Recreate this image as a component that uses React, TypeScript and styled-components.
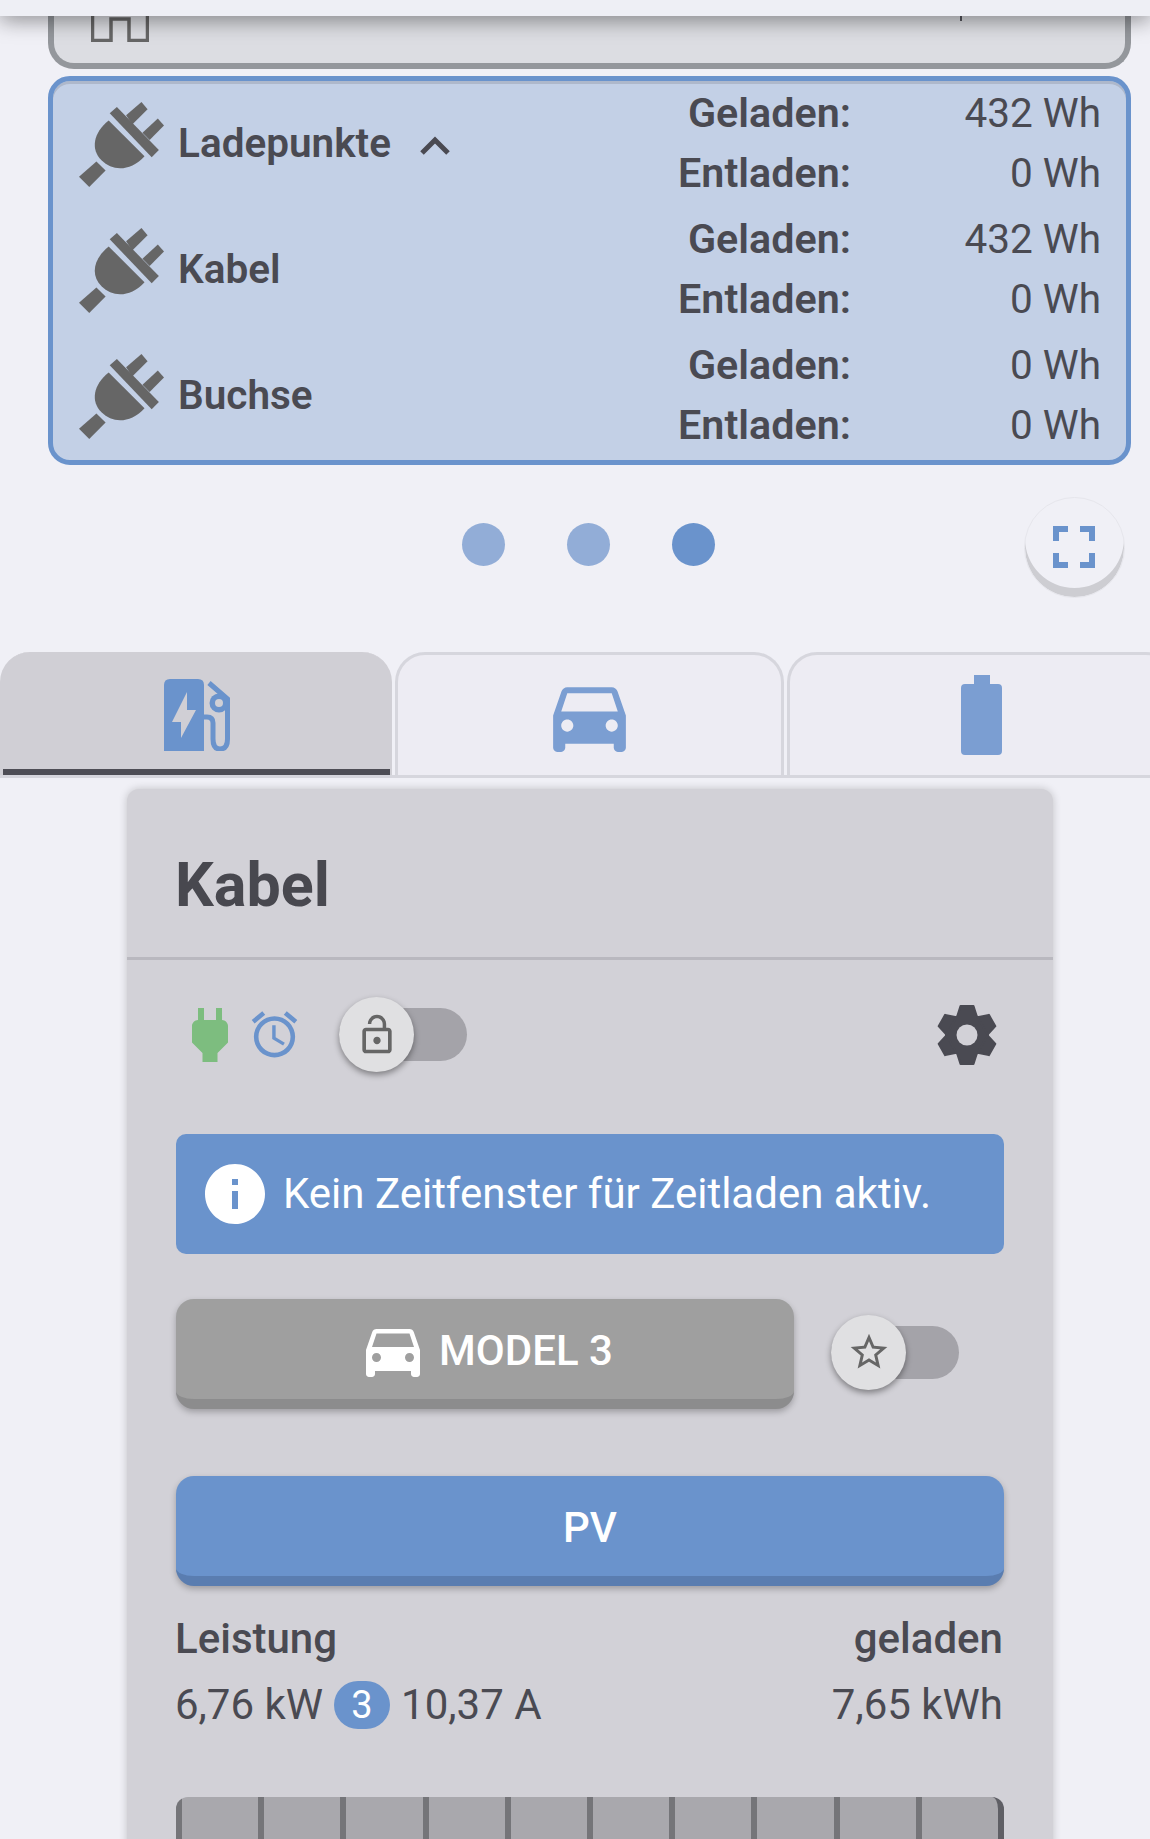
import React from 'react';
import styled, { createGlobalStyle } from 'styled-components';
import { MdDirectionsCar, MdInfo, MdLockOpen, MdOutlineAlarm, MdPower, MdStarBorder } from 'react-icons/md';

const GlobalStyle = createGlobalStyle`
  html, body {
    margin: 0;
    padding: 0;
    background: #f0f0f6;
    font-family: Roboto, "Liberation Sans", sans-serif;
    color: #4a4a52;
  }
`;

const Page = styled.div`
  width: 1150px;
  height: 1839px;
  overflow: hidden;
  background: #f0f0f6;
`;

const TopBar = styled.div`
  position: relative;
  z-index: 2;
  height: 16px;
  background: #eeeff5;
  box-shadow: 0 2px 22px rgba(0, 0, 0, 0.55);
`;

const ClippedCard = styled.div`
  box-sizing: border-box;
  display: flex;
  justify-content: space-between;
  height: 53px;
  margin: 0 19px 0 48px;
  padding-left: 37px;
  background: #dcdde2;
  border: 6px solid #94979c;
  border-top: 0;
  border-radius: 0 0 26px 26px;
`;

const Comma = styled.span`
  width: 2px;
  height: 5px;
  margin: 0 163px 0 0;
  background: #55555c;
`;

const SumCard = styled.section`
  box-sizing: border-box;
  height: 389px;
  margin: 7px 19px 0 48px;
  padding: 2px 25px 0 26px;
  background: #c3d0e6;
  border: 5px solid #6a93cc;
  border-radius: 22px;
  box-shadow: inset 0 3px 0 #aeb8cb;
`;

const SumRow = styled.div`
  display: grid;
  grid-template-columns: 86px 1fr 237px;
  column-gap: 13px;
  align-items: center;
  height: 120px;
  margin-bottom: 6px;
`;

const SumName = styled.div`
  display: flex;
  align-items: center;
  gap: 28px;
  font-size: 40.5px;
  font-weight: 600;
`;

const Chevron = styled.svg`
  width: 32px;
  height: 20px;
  margin-top: 4px;
`;

const PlugGlyphBox = styled.svg`
  margin-top: 3px;
`;

const FigureLabels = styled.div`
  display: flex;
  flex-direction: column;
  align-items: flex-end;
  font-size: 41.3px;
  font-weight: 600;
  line-height: 60px;
  justify-self: end;
  grid-column: 2;
  grid-row: 1;
`;

const FigureValues = styled.div`
  display: flex;
  flex-direction: column;
  align-items: flex-end;
  font-size: 40.5px;
  font-weight: 400;
  line-height: 60px;
  grid-column: 3;
  grid-row: 1;
`;

const NameCell = styled.div`
  grid-column: 2;
  grid-row: 1;
`;

const DotRow = styled.div`
  position: relative;
  display: flex;
  justify-content: center;
  gap: 62px;
  height: 187px;
  padding: 58px 0 0 27px;
  box-sizing: border-box;
`;

const Dot = styled.span<{ $active?: boolean }>`
  width: 43px;
  height: 43px;
  border-radius: 50%;
  background: ${(p) => (p.$active ? '#6a93cc' : '#92add7')};
`;

const FullscreenButton = styled.button`
  position: absolute;
  top: 32px;
  right: 25px;
  display: flex;
  align-items: center;
  justify-content: center;
  box-sizing: border-box;
  width: 101px;
  height: 101px;
  padding: 0 2px 2px 0;
  background: #f0f0f6;
  border: 1px solid #e6e6ec;
  border-radius: 50%;
  box-shadow: inset 0 -9px 0 #cdcdd2;
`;

const TabBar = styled.nav`
  display: flex;
  gap: 3px;
  height: 126px;
  box-sizing: border-box;
  border-bottom: 3px solid #d6d6dd;
`;

const Tab = styled.div<{ $active?: boolean }>`
  box-sizing: border-box;
  flex: 0 0 ${(p) => (p.$active ? '392px' : '389px')};
  display: flex;
  justify-content: center;
  height: 123px;
  border-radius: 30px 30px 0 0;
  background: ${(p) => (p.$active ? '#d0cfd5' : '#edecf3')};
  border: solid ${(p) => (p.$active ? '#d0cfd5' : '#d6d6dd')};
  border-width: ${(p) => (p.$active ? '0 2px 0 3px' : '3px 3px 0 3px')};
  color: #7b9ed2;
`;

const ActiveTabInner = styled.div`
  flex: 1;
  display: flex;
  justify-content: center;
  padding-top: 27px;
  height: 123px;
  box-sizing: border-box;
  border-bottom: 6px solid #4e4e56;
`;

const CarTabIcon = styled(MdDirectionsCar)`
  margin-top: 12px;
`;

const BatteryTabIcon = styled.svg`
  margin-top: 20px;
`;

const Card = styled.article`
  box-sizing: border-box;
  width: 926px;
  margin: 11px 0 0 127px;
  background: #d2d1d7;
  border-radius: 12px 12px 0 0;
  box-shadow: 0 0 8px rgba(0, 0, 0, 0.2);
  height: 1100px;
`;

const CardHeader = styled.header`
  box-sizing: border-box;
  height: 171px;
  padding: 61px 48px 0;
  border-bottom: 3px solid #b9b8bf;
`;

const CardTitle = styled.h1`
  margin: 0;
  font-size: 61px;
  font-weight: 700;
  line-height: 70px;
  color: #48484f;
`;

const CardBody = styled.div`
  padding: 37px 49px 0;
`;

const StatusRow = styled.div`
  display: flex;
  align-items: center;
  height: 75px;
`;

const PlugIcon = styled(MdPower)`
  margin-left: -2px;
  color: #7dbd7f;
`;

const AlarmIcon = styled(MdOutlineAlarm)`
  margin-left: 1px;
  color: #6a93cc;
`;

const Switch = styled.div<{ $offset?: number }>`
  display: flex;
  align-items: center;
  width: 128px;
  height: 53px;
  margin-left: ${(p) => p.$offset ?? 37}px;
  background: #a4a3a9;
  border-radius: 27px;
`;

const StarSwitch = styled(Switch)`
  margin-top: -4px;
`;

const SwitchThumb = styled.div`
  display: flex;
  flex: 0 0 75px;
  align-items: center;
  justify-content: center;
  height: 75px;
  color: #666;
  background: #e0e0e2;
  border-radius: 50%;
  box-shadow: 0 3px 6px rgba(0, 0, 0, 0.4);
`;

const GearIcon = styled.svg`
  margin-left: auto;
  margin-right: 7px;
`;

const Alert = styled.div`
  display: flex;
  align-items: center;
  gap: 12px;
  height: 120px;
  margin-top: 62px;
  padding-left: 23px;
  font-size: 42px;
  line-height: 116px;
  color: #fff;
  background: #6a93cc;
  border-radius: 10px;
`;

const VehicleRow = styled.div`
  display: flex;
  align-items: center;
  margin-top: 45px;
`;

const PushButton = styled.button<{ $tone: string; $edge: string; $wide?: boolean }>`
  box-sizing: border-box;
  display: flex;
  align-items: center;
  justify-content: center;
  gap: 10px;
  width: ${(p) => (p.$wide ? '828px' : '618px')};
  height: 110px;
  padding: 2px 0 0;
  font-family: inherit;
  font-size: 42px;
  font-weight: 500;
  color: #fff;
  background: ${(p) => p.$tone};
  border: 0;
  border-bottom: 10px solid ${(p) => p.$edge};
  border-radius: 18px;
  box-shadow: 0 3px 6px rgba(0, 0, 0, 0.25);
`;

const PvWrap = styled.div`
  margin-top: 67px;
`;

const Metrics = styled.div`
  display: grid;
  grid-template-columns: 1fr auto;
  row-gap: 17px;
  margin: 28px 1px 0 -1px;
  font-size: 42px;
  line-height: 49px;
`;

const MetricHead = styled.div<{ $right?: boolean }>`
  font-weight: 500;
  text-align: ${(p) => (p.$right ? 'right' : 'left')};
`;

const MetricValue = styled.div`
  display: flex;
  align-items: center;
  gap: 11px;
`;

const PhaseBadge = styled.span`
  display: inline-block;
  width: 56px;
  height: 48px;
  font-size: 38px;
  line-height: 48px;
  text-align: center;
  color: #fff;
  background: #6a93cc;
  border-radius: 24px;
`;

const EnergyBar = styled.div`
  display: grid;
  grid-template-columns: repeat(10, 1fr);
  height: 60px;
  margin-top: 68px;
  overflow: hidden;
  background: #a9a8ad;
  border-right: 6px solid #5f5f65;
  border-radius: 12px 12px 0 0;
`;

const BarSegment = styled.span`
  border-left: 6px solid #757579;
`;

const PlugGlyph = () => (
  <PlugGlyphBox width="86" height="86" viewBox="0 0 84 84" fill="#666">
    <polygon points="17,58 26,67 10,83 0,73" />
    <path d="M29 18 L64 53 C50 68 33 68 22 57 C11 46 14 30 29 18 Z" />
    <polygon points="30,11 37,5 78,47 71,54" />
    <polygon points="46,13 61,0 67,7 52,22" />
    <polygon points="62,30 77,16 83,23 69,37" />
  </PlugGlyphBox>
);

const ChargeStationGlyph = () => (
  <svg width="66" height="72" viewBox="0 0 66 72">
    <path d="M0 72 V6 Q0 0 6 0 H34 Q40 0 40 6 V72 Z" fill="#6a93cc" />
    <polygon points="23,13 8,43 17,43 17,59 32,31 23,31" fill="#d0cfd5" />
    <path
      d="M40 38 H43 Q49 38 49 44 V60 Q49 70 56 70 Q63.5 70 63.5 60 V20 L45 4"
      fill="none"
      stroke="#6a93cc"
      strokeWidth="5"
    />
    <circle cx="55" cy="24" r="9.5" fill="#6a93cc" />
    <circle cx="55" cy="24" r="4" fill="#d0cfd5" />
  </svg>
);

const LeftoverGlyph = () => (
  <svg width="58" height="26" viewBox="0 0 58 26" fill="none" stroke="#666" strokeWidth="3.5">
    <path d="M1.5 0 V24.5 H20 V3 H38 V24.5 H56.5 V0" />
  </svg>
);

const Gear = () => (
  <GearIcon width="60" height="60" viewBox="0 0 60 60" fill="#4a4a52">
    <circle cx="30" cy="30" r="22" />
    {[0, 60, 120, 180, 240, 300].map((deg) => (
      <polygon
        key={deg}
        points="23.5,1 36.5,1 40,12 20,12"
        stroke="#4a4a52"
        strokeWidth="2"
        strokeLinejoin="round"
        transform={`rotate(${deg} 30 30)`}
      />
    ))}
    <circle cx="30" cy="30" r="10.5" fill="#d2d1d7" />
  </GearIcon>
);

const rows = [
  { name: 'Ladepunkte', charged: '432 Wh', discharged: '0 Wh', open: true },
  { name: 'Kabel', charged: '432 Wh', discharged: '0 Wh' },
  { name: 'Buchse', charged: '0 Wh', discharged: '0 Wh' },
];

const App: React.FC = () => {
  return (
    <Page>
      <GlobalStyle />
      <TopBar />
      <ClippedCard>
        <LeftoverGlyph />
        <Comma />
      </ClippedCard>

      <SumCard>
        {rows.map((row) => (
          <SumRow key={row.name}>
            <PlugGlyph />
            <NameCell>
              <SumName>
                {row.name}
                {row.open && (
                  <Chevron viewBox="0 0 32 20" fill="none" stroke="#4a4a52" strokeWidth="5">
                    <polyline points="3,18 16,5 29,18" />
                  </Chevron>
                )}
              </SumName>
            </NameCell>
            <FigureLabels>
              <span>Geladen:</span>
              <span>Entladen:</span>
            </FigureLabels>
            <FigureValues>
              <span>{row.charged}</span>
              <span>{row.discharged}</span>
            </FigureValues>
          </SumRow>
        ))}
      </SumCard>

      <DotRow>
        <Dot />
        <Dot />
        <Dot $active />
        <FullscreenButton>
          <svg width="42" height="42" viewBox="0 0 42 42" fill="#6a93cc">
            <path d="M0 0 H15 V6 H6 V15 H0 Z" />
            <path d="M27 0 H42 V15 H36 V6 H27 Z" />
            <path d="M0 27 H6 V36 H15 V42 H0 Z" />
            <path d="M36 27 H42 V42 H27 V36 H36 Z" />
          </svg>
        </FullscreenButton>
      </DotRow>

      <TabBar>
        <Tab $active>
          <ActiveTabInner>
            <ChargeStationGlyph />
          </ActiveTabInner>
        </Tab>
        <Tab>
          <CarTabIcon size={97} />
        </Tab>
        <Tab>
          <BatteryTabIcon width="41" height="80" viewBox="0 0 41 80" fill="currentColor">
            <path d="M13 0 H29 V9 H37 Q41 9 41 13 V76 Q41 80 37 80 H4 Q0 80 0 76 V13 Q0 9 4 9 H13 Z" />
          </BatteryTabIcon>
        </Tab>
      </TabBar>

      <Card>
        <CardHeader>
          <CardTitle>Kabel</CardTitle>
        </CardHeader>
        <CardBody>
          <StatusRow>
            <PlugIcon size={72} />
            <AlarmIcon size={55} />
            <Switch>
              <SwitchThumb>
                <MdLockOpen size={44} />
              </SwitchThumb>
            </Switch>
            <Gear />
          </StatusRow>

          <Alert>
            <MdInfo size={72} />
            Kein Zeitfenster für Zeitladen aktiv.
          </Alert>

          <VehicleRow>
            <PushButton $tone="#9f9f9f" $edge="#8c8c8d">
              <MdDirectionsCar size={72} />
              MODEL 3
            </PushButton>
            <StarSwitch $offset={37}>
              <SwitchThumb>
                <MdStarBorder size={44} />
              </SwitchThumb>
            </StarSwitch>
          </VehicleRow>

          <PvWrap>
            <PushButton $tone="#6a93cc" $edge="#5a7db0" $wide>
              PV
            </PushButton>
          </PvWrap>

          <Metrics>
            <MetricHead>Leistung</MetricHead>
            <MetricHead $right>geladen</MetricHead>
            <MetricValue>
              6,76 kW
              <PhaseBadge>3</PhaseBadge>
              10,37 A
            </MetricValue>
            <MetricValue>7,65 kWh</MetricValue>
          </Metrics>

          <EnergyBar>
            {Array.from({ length: 10 }).map((_, i) => (
              <BarSegment key={i} />
            ))}
          </EnergyBar>
        </CardBody>
      </Card>
    </Page>
  );
};

export default App;
